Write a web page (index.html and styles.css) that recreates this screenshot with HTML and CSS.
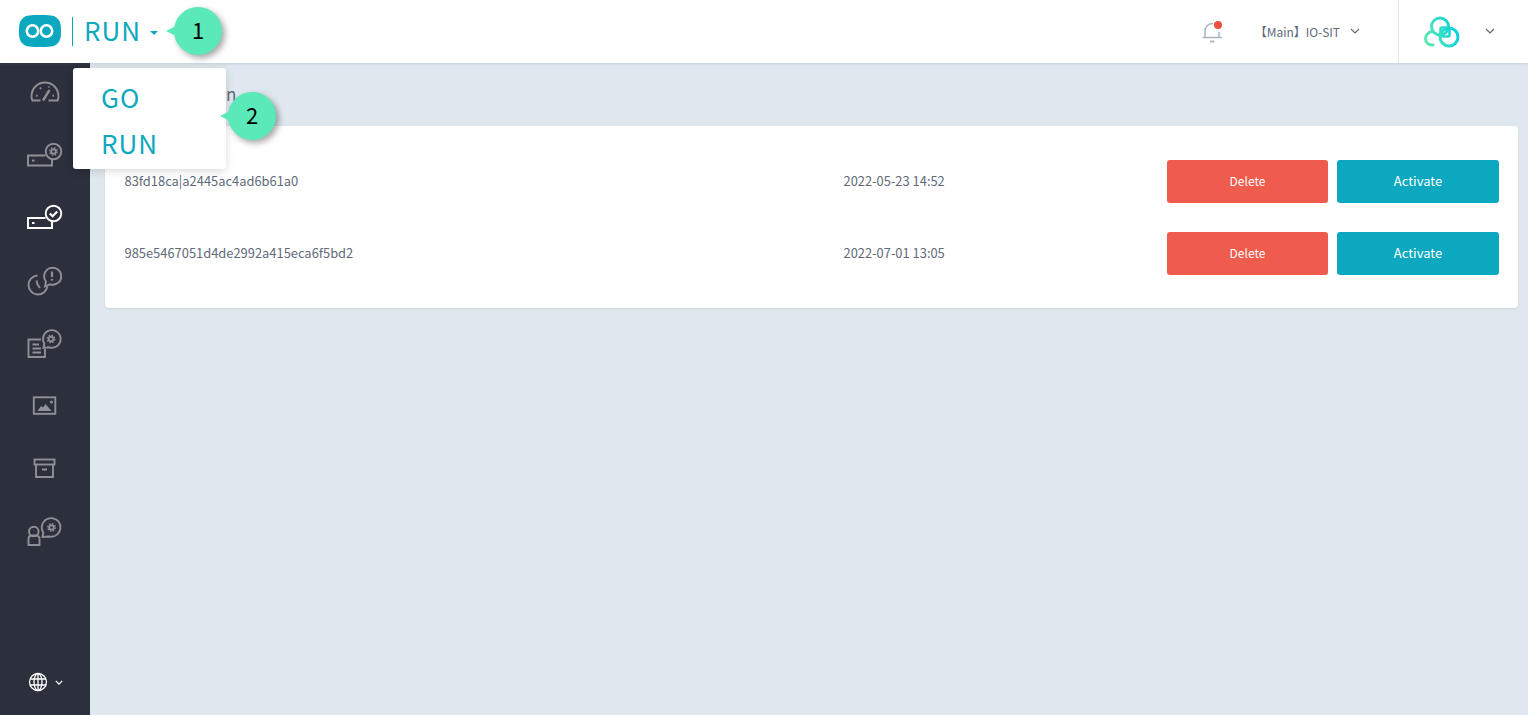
FILE: index.html
```html
<!DOCTYPE html>
<html lang="en">
<head>
  <meta charset="UTF-8">
  <meta name="viewport" content="width=device-width, initial-scale=1.0">
  <title>RUN</title>
  <link rel="stylesheet" href="styles.css">
</head>
<body>
  <header class="topbar">
    <svg class="logo" viewBox="0 0 42 32">
      <path d="M21 0C30 0 35 0.2 38 3C41.5 6 42 10 42 16C42 22 41.500 26 38 29C35 31.800 30 32 21 32C12 32 7 31.800 4 29C0.500 26 0 22 0 16C0 10 0.500 6 4 3C7 0.200 12 0 21 0Z" fill="#0ba8bf"/>
      <circle cx="13.500" cy="16" r="5.700" fill="none" stroke="#fff" stroke-width="2.600"/>
      <circle cx="27.500" cy="16" r="5.700" fill="none" stroke="#fff" stroke-width="2.600"/>
    </svg>
    <span class="brand-divider"></span>
    <span class="brand-name">RUN</span>
    <span class="brand-caret"></span>

    <div class="topbar-right">
      <svg class="bell" viewBox="0 0 24 24" fill="none" stroke="#aab4be" stroke-width="1.500">
        <path d="M5 17V11C5 7 8 3.500 13 3.500"/>
        <path d="M19 12V17"/>
        <path d="M2.500 17.500H22"/>
        <path d="M10 21.500H14.500" stroke-width="1.800"/>
        <circle cx="18" cy="5" r="4" fill="#e8503f" stroke="none"/>
      </svg>
      <span class="env-name">【Main】IO-SIT</span>
      <svg class="chevron" viewBox="0 0 10 6"><path d="M1 1L5 5L9 1"/></svg>
      <span class="topbar-divider"></span>
      <svg class="user-logo" viewBox="0 0 36 32" fill="none" stroke-width="3">
        <defs>
          <linearGradient id="ringGrad" gradientUnits="userSpaceOnUse" x1="0" y1="26" x2="34" y2="16">
            <stop offset="0" stop-color="#62e8ae"/>
            <stop offset="1" stop-color="#06d2e0"/>
          </linearGradient>
        </defs>
        <path d="M8 15.500C3.500 16.500 1.500 20 1.500 23C1.500 27 5 29.500 9 29" stroke="url(#ringGrad)" stroke-linecap="round"/>
        <circle cx="16" cy="10.500" r="8.500" stroke="url(#ringGrad)"/>
        <circle cx="25" cy="21" r="9" stroke="url(#ringGrad)"/>
        <rect x="16.500" y="11.500" width="9" height="9" rx="1.500" stroke="url(#ringGrad)" stroke-width="2.600"/>
      </svg>
      <svg class="chevron chevron-user" viewBox="0 0 10 6"><path d="M1 1L5 5L9 1"/></svg>
    </div>
  </header>

  <div class="layout">
    <nav class="sidebar">
      <svg class="nav-icon" viewBox="0 0 40 40">
        <path d="M15.500 28.500H7.500C6.800 27 6.500 26 6.500 24.500C6.500 16.500 12.500 10.500 20 10.500C27.500 10.500 33.500 16.500 33.500 24.500C33.500 26 33.200 27 32.500 28.500H23.500"/>
        <path d="M18 28.500L24.500 18" stroke-width="2.400"/>
        <path d="M11 23.500L12.500 24M15 15.500L16 17M24 14.500L23.500 15.500M29 23.500L27.500 24"/>
      </svg>
      <svg class="nav-icon" viewBox="0 0 40 40">
        <path d="M20.500 20.500H3V30.500H27V24.500"/>
        <path d="M7 25.500H9.500" stroke-width="2"/>
        <circle cx="28.500" cy="16.500" r="7.800"/>
        <circle cx="28.500" cy="16.500" r="2.300"/>
        <circle class="gear-teeth" cx="28.500" cy="16.500" r="3.800"/>
      </svg>
      <svg class="nav-icon nav-icon-active" viewBox="0 0 40 40">
        <path d="M20.500 21H3V31H27V25"/>
        <path d="M7 26H9.500" stroke-width="2"/>
        <circle cx="28.500" cy="16.500" r="7.800"/>
        <path d="M24.800 16.500L27.600 19.200L32.200 14.400" stroke-width="2.200"/>
      </svg>
      <svg class="nav-icon" viewBox="0 0 40 40">
        <path d="M12.500 15.500A9.500 9.500 0 1 0 22.400 26.500"/>
        <path d="M11.500 20.500L12.500 24.500L15 28"/>
        <path d="M20 26.500L21 21.500A8.500 8.500 0 1 1 25 24.300Z"/>
        <path d="M27 11.500V17" stroke-width="2.200"/>
        <path d="M27 18.800V20.600" stroke-width="2.200"/>
      </svg>
      <svg class="nav-icon" viewBox="0 0 40 40">
        <path d="M16 16.500H3.500V34H20V26"/>
        <path d="M7.500 21.500H14M7.500 25.500H16M7.500 29.500H16" stroke-width="2"/>
        <path d="M18.500 25L19.300 20.500A8.800 8.800 0 1 1 24 24.300Z"/>
        <circle cx="26" cy="16" r="2.300"/>
        <circle class="gear-teeth" cx="26" cy="16" r="3.800"/>
      </svg>
      <svg class="nav-icon" viewBox="0 0 40 40">
        <rect x="8.800" y="12.300" width="21.500" height="16.500"/>
        <path class="nav-fill" d="M12.500 26L16 21L18 22.500L20.500 19L26.500 26Z"/>
        <circle class="nav-fill" cx="26.500" cy="17" r="1.500"/>
      </svg>
      <svg class="nav-icon" viewBox="0 0 40 40">
        <rect x="9.500" y="11.500" width="20" height="5"/>
        <path d="M11 16.500V29H28V16.500"/>
        <path d="M17 21.500H22" stroke-width="2"/>
      </svg>
      <svg class="nav-icon" viewBox="0 0 40 40">
        <circle cx="8.800" cy="20.500" r="4.800"/>
        <path d="M3.500 34V28C3.500 26 5 24.500 7 24.500H11C13 24.500 14.500 26 14.500 28V34Z"/>
        <path d="M17.500 26L18.300 21.500A9.300 9.300 0 1 1 24 25.500Z"/>
        <circle cx="26.500" cy="16.500" r="2.300"/>
        <circle class="gear-teeth" cx="26.500" cy="16.500" r="3.800"/>
      </svg>

      <div class="lang">
        <svg class="globe" viewBox="0 0 20 20" fill="none" stroke="#fff" stroke-width="1.300">
          <circle cx="10" cy="10" r="8.500"/>
          <ellipse cx="10" cy="10" rx="4" ry="8.500"/>
          <path d="M10 1.500V18.500M2 7H18M2 13H18"/>
        </svg>
        <svg class="lang-chevron" viewBox="0 0 10 6"><path d="M1 1L5 5L9 1"/></svg>
      </div>
    </nav>

    <main class="content">
      <h2 class="page-title">Token Activation</h2>
      <section class="card">
        <div class="row">
          <span class="cell">83fd18ca|a2445ac4ad6b61a0</span>
          <span class="cell">2022-05-23 14:52</span>
          <a class="button button-delete">Delete</a>
          <a class="button button-activate">Activate</a>
        </div>
        <div class="row">
          <span class="cell">985e5467051d4de2992a415eca6f5bd2</span>
          <span class="cell">2022-07-01 13:05</span>
          <a class="button button-delete">Delete</a>
          <a class="button button-activate">Activate</a>
        </div>
      </section>
    </main>
  </div>

  <div class="menu">
    <a class="menu-item">GO</a>
    <a class="menu-item">RUN</a>
  </div>
  <div class="callout callout-one">1</div>
  <div class="callout callout-two">2</div>
</body>
</html>
```

FILE: styles.css
```css
* {
  box-sizing: border-box;
}
html, body {
  height: 100%;
}
body {
  font-family: "Noto Sans CJK SC", "Noto Sans", sans-serif;
  background-color: #e0e8ef;
  color: #5f6b7a;
  margin: 0;
  overflow: hidden;
}
.topbar {
  display: flex;
  align-items: center;
  height: 63px;
  padding-left: 19px;
  background-color: white;
  box-shadow: 0 1px 3px rgba(90, 110, 130, 0.2);
  position: relative;
  z-index: 2;
}
.logo {
  width: 42px;
  height: 32px;
  margin-bottom: 1px;
}
.brand-divider {
  width: 1px;
  height: 29px;
  margin: 0 11px 0 11px;
  background-color: #0ba8bf;
}
.brand-name {
  padding-bottom: 3px;
  font-size: 26px;
  line-height: 1;
  letter-spacing: 1px;
  color: #0ba8bf;
}
.brand-caret {
  width: 0;
  height: 0;
  margin: 3px 0 0 9px;
  border-top: 4px solid #0ba8bf;
  border-left: 4px solid transparent;
  border-right: 4px solid transparent;
}
.topbar-right {
  display: flex;
  align-items: center;
  align-self: stretch;
  margin-left: auto;
}
.bell {
  width: 24px;
  height: 24px;
}
.env-name {
  margin-left: 31px;
  font-size: 12px;
  color: #5f6b7a;
}
.chevron {
  width: 10px;
  height: 6px;
  margin: 0 38px 2px 10px;
  fill: none;
  stroke: #5f6b7a;
  stroke-width: 1.2;
}
.topbar-divider {
  width: 1px;
  height: 63px;
  background-color: #e0e8ef;
}
.user-logo {
  width: 36px;
  height: 32px;
  margin-left: 25px;
}
.chevron-user {
  margin: 0 33px 2px 25px;
}
.layout {
  display: flex;
  height: 652px;
}
.sidebar {
  display: flex;
  flex-direction: column;
  align-items: flex-start;
  gap: 22.7px;
  width: 90px;
  padding: 9px 0 0 25px;
  background-color: #2c2f3c;
}
.nav-icon {
  flex: none;
  width: 40px;
  height: 40px;
  fill: none;
  stroke: #8f9095;
  stroke-width: 1.9;
}
.nav-icon .nav-fill {
  fill: #8f9095;
  stroke: none;
}
.nav-icon .gear-teeth {
  stroke-width: 1.4;
  stroke-dasharray: 1.500 1.484;
}
.nav-icon-active {
  stroke: white;
}
.lang {
  display: flex;
  align-items: center;
  margin-top: auto;
  margin-left: 3px;
  padding-bottom: 23px;
}
.globe {
  width: 20px;
  height: 20px;
}
.lang-chevron {
  width: 8px;
  height: 5px;
  margin-left: 7px;
  fill: none;
  stroke: white;
  stroke-width: 1.6;
}
.content {
  flex: 1;
  padding: 0 10px 0 15px;
}
.page-title {
  height: 63px;
  margin: 0;
  font-size: 17px;
  font-weight: 400;
  line-height: 61px;
  color: #5f6b7a;
}
.card {
  display: flex;
  flex-direction: column;
  gap: 29px;
  padding: 34px 19px 33px 19.5px;
  background-color: white;
  border-radius: 4px;
  box-shadow: 0 1px 2px rgba(90, 110, 130, 0.15);
}
.row {
  display: grid;
  grid-template-columns: 719px 1fr 161px 171px;
  align-items: center;
  font-size: 12.9px;
}
.cell {
  padding-bottom: 3px;
}
.button {
  display: flex;
  align-items: center;
  justify-content: center;
  height: 43px;
  padding-bottom: 3px;
  border-radius: 3px;
  color: white;
  cursor: pointer;
}
.button-delete {
  font-size: 12px;
  background-color: #ef5b4c;
}
.button-activate {
  margin-left: 9px;
  font-size: 13px;
  background-color: #0ba8bf;
}
.menu {
  position: absolute;
  top: 68px;
  left: 73px;
  z-index: 3;
  display: flex;
  flex-direction: column;
  width: 153px;
  height: 101px;
  padding: 7px 0 0 28px;
  background-color: white;
  border-radius: 3px;
  box-shadow: 0 2px 8px rgba(0, 0, 0, 0.15);
}
.menu-item {
  height: 46px;
  font-size: 26px;
  line-height: 44px;
  letter-spacing: 1px;
  color: #0ba8bf;
}
.callout {
  position: absolute;
  z-index: 4;
  width: 48px;
  height: 48px;
  border-radius: 50%;
  font-size: 22px;
  line-height: 45px;
  text-align: center;
  color: black;
  background-color: #5ae9b8;
  box-shadow: 3px 3px 6px rgba(0, 0, 0, 0.35);
}
.callout::before {
  content: "";
  position: absolute;
  top: 19px;
  left: -8px;
  border-top: 5px solid transparent;
  border-bottom: 5px solid transparent;
  border-right: 10px solid #5ae9b8;
}
.callout-one {
  top: 7px;
  left: 174px;
}
.callout-two {
  top: 92px;
  left: 228px;
}
```
